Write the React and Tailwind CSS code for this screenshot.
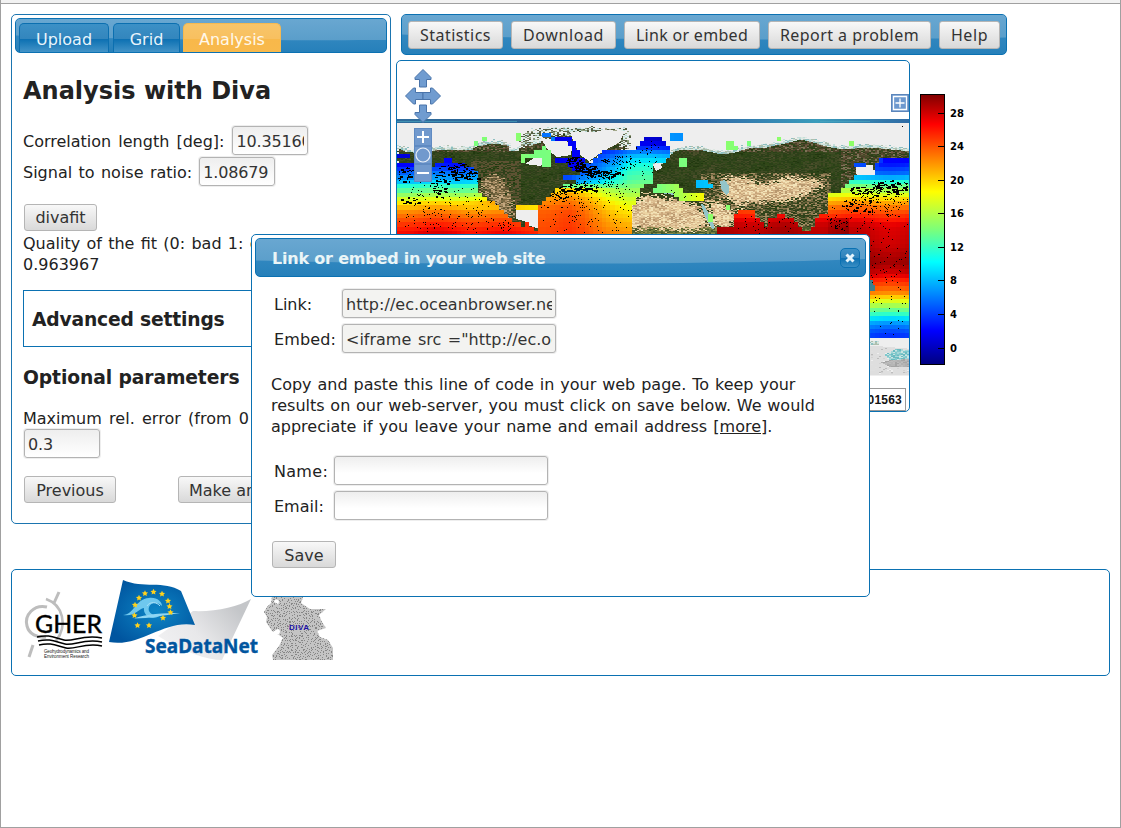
import React from "react";

/* ---------- helpers for the temperature map ---------- */
function rng(seed) {
  let s = seed;
  return () => {
    s = (s * 1664525 + 1013904223) % 4294967296;
    return s / 4294967296;
  };
}

function inside(poly, x, y) {
  let hit = false;
  for (let i = 0, j = poly.length - 1; i < poly.length; j = i++) {
    const [xi, yi] = poly[i];
    const [xj, yj] = poly[j];
    if (yi > y !== yj > y && x < ((xj - xi) * (y - yi)) / (yj - yi) + xi) hit = !hit;
  }
  return hit;
}

function profile(points, y) {
  if (y <= points[0][0]) return points[0][1];
  for (let i = 1; i < points.length; i++) {
    if (y <= points[i][0]) {
      const [y0, v0] = points[i - 1];
      const [y1, v1] = points[i];
      return v0 + ((v1 - v0) * (y - y0)) / (y1 - y0);
    }
  }
  return points[points.length - 1][1];
}

function jet(temp) {
  const t = Math.max(0, Math.min(1, (temp + 2) / 32.3));
  const c = (v) => Math.round(255 * Math.max(0, Math.min(1, v)));
  const r = t < 0.89 ? (t - 0.35) / 0.31 : 1 - (t - 0.89) * 4.5;
  const g = t < 0.64 ? (t - 0.125) / 0.25 : 1 - (t - 0.64) / 0.27;
  const b = t < 0.34 ? 0.5 + t / 0.22 : 1 - (t - 0.34) / 0.31;
  return `rgb(${c(r)},${c(g)},${c(b)})`;
}

const PAC_EAST = [[155, 1], [165, 2.5], [172, 5], [180, 7.5], [186, 11], [192, 14], [198, 17.5], [205, 20.5], [212, 23], [220, 25], [227, 26.5], [234, 27.5]];
const ATL_WEST = [[136, 1], [160, 1.5], [175, 3], [182, 6], [186, 13], [190, 20], [196, 22], [210, 24.5], [234, 25.5]];
const ATL_EAST = [[137, -0.5], [145, 1], [150, 5], [157, 8], [165, 10], [180, 12.5], [190, 15], [200, 17.5], [212, 19.5], [234, 22.5]];
const PAC_WEST = [[157, 1], [168, 4], [175, 6], [182, 11], [188, 15], [196, 19], [203, 22], [210, 24.5], [218, 26.5], [226, 28], [245, 28.5], [262, 29.8], [272, 28.5], [280, 26.5], [288, 24.5], [294, 22.5], [300, 19], [305, 16.5], [311, 13], [316, 10.5], [322, 7.5], [330, 5], [338, 3.5]];

const SEAS = [
  { poly: [[397, 153], [409, 153], [409, 157], [397, 157]], t: () => 1 },
  { poly: [[397, 160], [414, 165], [432, 168], [444, 161], [450, 157], [453, 161], [462, 163], [470, 167], [477, 172], [478, 190], [486, 198], [500, 206], [504, 213], [514, 221], [526, 227], [534, 231], [543, 236], [397, 236]], t: (x, y) => profile(PAC_EAST, y) + (x > 455 ? ((x - 455) / 45) * (y > 205 ? -0.5 : 2) : 0) },
  { poly: [[542, 133], [558, 136], [572, 136], [576, 143], [580, 152], [584, 163], [575, 173], [565, 163], [555, 162], [556, 157], [572, 157], [570, 146], [550, 141]], t: (x) => (x < 556 ? 6 : 1) },
  { poly: [[536, 236], [538, 207], [547, 197], [554, 190], [564, 185], [580, 181], [563, 181], [563, 174], [582, 174], [574, 161], [588, 163], [597, 158], [602, 150], [624, 148], [634, 148], [642, 141], [650, 137], [657, 137], [666, 143], [669, 150], [670, 158], [665, 163], [652, 164], [655, 170], [654, 182], [643, 186], [639, 196], [633, 206], [631, 236]], t: (x, y) => { const k = Math.max(0, Math.min(1, (x - 570) / 60)); return profile(ATL_WEST, y) * (1 - k) + profile(ATL_EAST, y) * k; } },
  { poly: [[524, 221], [529, 219], [534, 234], [524, 236]], t: () => 26 },
  { poly: [[518, 205], [538, 205], [538, 209], [516, 209]], t: () => 20 },
  { poly: [[653, 188], [662, 184], [679, 183], [682, 191], [704, 192], [704, 200], [678, 200], [672, 194], [653, 192]], t: (x) => 13 + (x - 650) / 9 },
  { poly: [[696, 180], [708, 179], [713, 187], [696, 188]], t: () => 8 },
  { poly: [[718, 226], [726, 226], [735, 226], [735, 216], [738, 210], [752, 210], [757, 216], [760, 224], [768, 226], [770, 218], [782, 213], [791, 219], [798, 226], [806, 230], [812, 229], [816, 219], [828, 211], [828, 191], [836, 192], [850, 184], [853, 177], [870, 177], [884, 160], [909, 157], [909, 339], [880, 338], [868, 336], [868, 236], [718, 236]], t: (x, y) => profile(PAC_WEST, y) + (x < 828 ? 0.8 : 0) + (Math.abs(x - 838) < 12 && Math.abs(y - 226) < 9 ? 1.3 : 0) },
  { poly: [[853, 162], [885, 163], [889, 157], [880, 157], [880, 162], [884, 162], [884, 175], [873, 175], [873, 164], [854, 166]], t: () => 4 },
  { poly: [[532, 154], [546, 145], [552, 149], [550, 165], [544, 169], [541, 158], [522, 161], [523, 155]], t: () => 14.4 },
  { poly: [[679, 158], [688, 158], [687, 165], [679, 165]], t: () => 14.5 },
  { poly: [[708, 213], [713, 213], [713, 221], [708, 221]], t: () => 14.5 },
  { poly: [[725, 204], [730, 204], [730, 209], [725, 209]], t: () => 14.5 },
  { poly: [[726, 142], [738, 144], [738, 149], [726, 149]], t: () => 14.5 },
  { poly: [[671, 132], [682, 132], [682, 140], [671, 140]], t: () => 7 },
  { poly: [[747, 141], [752, 141], [752, 146], [747, 146]], t: () => 14.5 },
  { poly: [[777, 137], [782, 137], [782, 141], [777, 141]], t: () => 14.5 },
  { poly: [[850, 141], [854, 141], [854, 145], [850, 145]], t: () => 14.5 },
  { poly: [[517, 131], [522, 131], [522, 140], [517, 140]], t: () => 14.5 },
  { poly: [[483, 137], [487, 137], [487, 141], [483, 141]], t: () => 14.5 },
  { poly: [[474, 141], [478, 141], [478, 145], [474, 145]], t: () => 14.5 },
];

const GAPS = [
  [[516, 208], [539, 208], [539, 229], [530, 226], [524, 221], [516, 219]],
  [[856, 165], [873, 165], [873, 174], [861, 177], [856, 174]],
  [[546, 139], [566, 140], [572, 147], [571, 155], [557, 157], [548, 150], [540, 137]],
  [[570, 132], [624, 131], [620, 142], [604, 151], [589, 161], [580, 155], [573, 140]],
  [[534, 158], [546, 157], [541, 166], [525, 164]],
  [[653, 165], [661, 163], [662, 168], [656, 171]],
];

const LAND = [
  [[397, 145], [405, 148], [420, 150], [440, 146], [470, 147], [476, 143], [492, 140], [507, 142], [508, 148], [519, 147], [519, 139], [526, 130], [542, 127], [628, 127], [628, 148], [600, 156], [590, 160], [584, 176], [570, 190], [560, 236], [397, 236]],
  [[622, 236], [622, 180], [646, 176], [650, 164], [662, 160], [664, 156], [674, 148], [684, 146], [702, 147], [722, 151], [734, 149], [748, 145], [766, 144], [784, 140], [800, 136], [813, 139], [822, 142], [840, 146], [870, 144], [909, 148], [909, 164], [868, 170], [850, 190], [846, 236]],
];
const DESERT = [
  [[482, 178], [498, 175], [508, 188], [514, 214], [502, 220], [484, 194]],
  [[622, 206], [646, 194], [660, 196], [672, 199], [700, 204], [710, 226], [690, 230], [645, 228], [622, 230]],
  [[704, 198], [722, 204], [738, 216], [726, 228], [714, 224]],
  [[722, 178], [745, 177], [762, 184], [790, 176], [824, 183], [806, 195], [780, 202], [752, 201], [738, 207], [722, 195]],
];
const ICY = [
  [[519, 127], [580, 127], [574, 134], [548, 135], [545, 141], [527, 146], [519, 146]],
  [[580, 127], [628, 127], [628, 148], [618, 145], [622, 132], [580, 133]],
];
const GREENS = ["#22380f", "#2a4217", "#304718", "#37481f", "#2b4018", "#404a24", "#2f3f1a", "#4b4e2b"];
const SANDS = ["#e6ca9c", "#ecd5a4", "#dabb8e", "#f3e3b8", "#c9a67b", "#e3c99d", "#b7986f", "#ebd2a6"];
const ICES = ["#eeeeee", "#8d9c7b", "#dfeee9", "#586045", "#b9dcd8", "#efefef", "#eeeeee", "#a2a78a"];
const COAST = ["#c5dfda", "#8ebfc0", "#aebfae", "#dde8e2"];
const POLAR = ["#d2d2d2", "#e0e0e0", "#bcbcbc", "#eeeeee"];

function buildMap() {
  const r = rng(77);
  const texture = {};
  const put = (c, x, y, w, h) => {
    texture[c] = (texture[c] || "") + `M${x} ${y}h${w}v${h}h-${w}z`;
  };
  const soft = (x, y) => Math.sin(x * 0.19 + Math.sin(y * 0.22) * 2) + Math.sin(y * 0.31 + x * 0.07);
  for (let y = 124; y < 236; y += 1) {
    for (let x = 397; x < 909; x += 2) {
      const jx = x + (r() - 0.5) * 4;
      const jy = y + (r() - 0.5) * 3;
      if (!LAND.some((p) => inside(p, jx, jy))) continue;
      const v = Math.floor(r() * 4.5 + 1.7 + soft(x, y));
      const k = Math.max(0, Math.min(7, v));
      const jx2 = x + (r() - 0.5) * 10;
      const jy2 = y + (r() - 0.5) * 7;
      let color = GREENS[k];
      if (ICY.some((p) => inside(p, jx, jy))) color = ICES[k];
      else if (DESERT.some((p) => inside(p, jx2, jy2))) color = x < 520 ? ["#a58a62", "#7a6a44", "#c4a880", "#5f5633"][k % 4] : SANDS[k];
      else if (!LAND.some((p) => inside(p, x, y - 3))) color = COAST[k % 4];
      else if ((y < 152 || (x > 840 && y > 148)) && r() > 0.5) color = ["#6b5840", "#57492f", "#7d7358", "#4b4128"][k % 4];
      else if (x > 470 && x < 520 && y > 160 && r() > 0.5) color = "#5e5233";
      else if (x > 620 && y > 226) color = ["#6d7a3c", "#55642c", "#8a8a4c", "#47582a"][k % 4];
      else if (x > 700 && x < 830 && y > 172 && r() > 0.45) color = ["#8d7850", "#6f6640", "#a68f66", "#5c5a34"][k % 4];
      put(color, x, y, 2, 1);
    }
  }
  for (let y = 341; y < 375; y += 1) {
    for (let x = 869; x < 909; x += 2) {
      const k = Math.floor(r() * 4);
      if (y < 345 && x < 879) put(COAST[k], x, y, 2, 1);
      else if (y > 345 + (x - 869) * 0.08) {
        const lake = inside([[884, 354], [895, 348], [909, 350], [909, 358], [890, 360]], x, y);
        const dark = inside([[880, 362], [895, 358], [909, 359], [909, 367], [888, 366]], x, y);
        if (lake) put(["#80c8cc", "#a5d6d8", "#6bbac0", "#cce4e2"][k], x, y, 2, 1);
        else if (dark) put(["#b0b0b0", "#a4a4a4", "#bcbcbc", "#b5b5b5"][k], x, y, 2, 1);
        else put(r() > 0.85 ? POLAR[k] : "#dedede", x, y, 2, 1);
      }
    }
  }
  const cells = {};
  const cw = 512 / 120;
  for (let j = 0; j < 64; j++) {
    for (let i = 0; i < 120; i++) {
      const x = 397 + i * cw;
      const y = 120 + j * cw;
      const cx = x + cw / 2;
      const cy = y + cw / 2;
      if (cy > 240 && cx < 866) continue;
      if (GAPS.some((p) => inside(p, cx, cy))) continue;
      const sea = SEAS.find((s) => inside(s.poly, cx, cy));
      if (!sea) continue;
      const t = sea.t(cx, cy) + Math.sin(cx * 0.09) * 0.4;
      const col = jet(t);
      const x0 = Math.round(x);
      const y0 = Math.round(y);
      cells[col] = (cells[col] || "") + `M${x0} ${y0}H${Math.round(x + cw)}V${Math.round(y + cw)}H${x0}z`;
    }
  }
  /* observation positions: [cx, cy, rx, ry, count, streak length] */
  const clusters = [
    [440, 175, 42, 9, 60, 4], [457, 171, 20, 9, 60, 5], [405, 176, 10, 9, 22, 4], [439, 190, 7, 7, 22, 4],
    [410, 200, 14, 4, 16, 3], [455, 195, 45, 24, 110, 1], [450, 222, 60, 12, 70, 1], [505, 226, 8, 6, 16, 1],
    [574, 162, 9, 6, 42, 3], [585, 168, 12, 6, 45, 4], [602, 173, 20, 4, 60, 4], [575, 188, 22, 4, 60, 4],
    [558, 195, 10, 7, 40, 2], [595, 180, 22, 8, 60, 1], [622, 162, 18, 7, 55, 1], [606, 160, 5, 3, 14, 2],
    [600, 205, 40, 30, 120, 1], [560, 205, 22, 26, 40, 1], [648, 149, 14, 9, 14, 1], [650, 165, 10, 18, 18, 1],
    [875, 190, 26, 6, 60, 4], [890, 186, 18, 6, 45, 4], [858, 205, 18, 7, 38, 3], [885, 198, 24, 18, 100, 1],
    [870, 215, 45, 20, 80, 1], [838, 222, 9, 8, 30, 1], [750, 225, 18, 10, 22, 1], [782, 226, 15, 9, 14, 1],
    [885, 258, 22, 24, 46, 1], [888, 300, 20, 36, 34, 1], [680, 193, 22, 6, 10, 1],
  ];
  let dots = "M902 126h1v1h-1z";
  const d = rng(912);
  clusters.forEach(([cx, cy, rx, ry, n, len]) => {
    for (let i = 0; i < n; i++) {
      const a = d() * Math.PI * 2;
      const q = Math.sqrt(d());
      const x = Math.round(cx + Math.cos(a) * q * rx);
      const y = Math.round(cy + Math.sin(a) * q * ry);
      const w = 1 + Math.floor(d() * len);
      const h = len > 2 && d() > 0.7 ? 2 : 1;
      if (x < 398 || x + w > 908) continue;
      if (!SEAS.some((s) => inside(s.poly, x, y)) || GAPS.some((p) => inside(p, x, y))) continue;
      dots += `M${x} ${y}h${w}v${h}h-${w}z`;
    }
  });
  return { texture: Object.entries(texture), cells: Object.entries(cells), dots };
}

const MAP = buildMap();

function OceanMap() {
  return (
    <svg className="block" width="512" height="349" viewBox="397 61 512 349" shapeRendering="crispEdges">
      <defs>
        <linearGradient id="strip" x1="0" x2="1" y1="0" y2="0">
          <stop offset="0" stopColor="#2f6d9c" /><stop offset=".3" stopColor="#2a5f92" /><stop offset=".6" stopColor="#2f6ba8" />
          <stop offset=".82" stopColor="#3a9cbb" /><stop offset="1" stopColor="#2f6ba5" />
        </linearGradient>
      </defs>
      <rect x="397" y="119" width="512" height="257" fill="#eeeeee" />
      <rect x="397" y="119" width="512" height="4" fill="url(#strip)" />
      <path d="M397 121h120v1h-120zM820 121h50v1h-50z" fill="#4aa3bd" opacity=".7" />
      {MAP.texture.map(([c, p]) => <path key={c} d={p} fill={c} />)}
      {GAPS.map((g, i) => <polygon key={i} points={g.map((q) => q.join(",")).join(" ")} fill="#eeeeee" />)}
      <path d="M720 181l5-1 4 6v7l-3 2-4-4zM701 204l3 1 6 11 5 12-3 1-7-13zM654 192l20 3 12 6h16v-2h-18l-12-6z" fill="#93c5c9" />
      {MAP.cells.map(([c, p]) => <path key={c} d={p} fill={c} />)}
      <path d="M870 280h3v5h2v6h-5z" fill="#3d7f8d" />
      <path d={MAP.dots} fill="#000" />
    </svg>
  );
}

function MapControls() {
  const arrow = "M0-9.5 8-1.500V.5H3.500V8h-7V.5H-8v-2z";
  return (
    <svg className="absolute left-2 top-1.5" width="38" height="118" viewBox="405 67 38 118">
      <g fill="#709cd0" stroke="#4a74aa" strokeWidth="1">
        <path d={arrow} transform="translate(423 79)" />
        <path d={arrow} transform="translate(415 96) rotate(-90)" />
        <path d={arrow} transform="translate(431 96) rotate(90)" />
        <path d={arrow} transform="translate(423 113) rotate(180)" />
      </g>
      <g fill="#7199cd" stroke="#5f8ac2">
        <rect x="414.5" y="128.500" width="17" height="17" />
        <rect x="414.5" y="146.500" width="17" height="17" />
        <rect x="414.5" y="164.500" width="17" height="17" />
      </g>
      <path d="M417 137h12M423 131v12M417 173h12" stroke="#fff" strokeWidth="2" />
      <circle cx="423" cy="155" r="7" fill="none" stroke="#e9eff8" strokeWidth="1.2" />
    </svg>
  );
}

/* ---------- shared widgets ---------- */
const BLUE_BAR = "relative overflow-hidden rounded-[5px] border border-[#0b71b2] bg-linear-to-b from-[#3d90c6] to-[#2680ba]";

function Gloss({ d }) {
  return (
    <svg className="absolute inset-0 h-full w-full" viewBox="0 0 100 100" preserveAspectRatio="none">
      <defs>
        <linearGradient id="gloss" x1="0" x2="0" y1="0" y2="1">
          <stop offset="0" stopColor="#69a7d1" /><stop offset="1" stopColor="#5a9eca" />
        </linearGradient>
      </defs>
      <path d={d} fill="url(#gloss)" />
    </svg>
  );
}

function Button({ children, className }) {
  return (
    <button className={`flex shrink-0 items-center justify-center rounded-[3px] border border-[#b5b5b5] bg-linear-to-b from-[#f8f8f8] to-[#d9d9d9] whitespace-nowrap text-[#333] ${className}`}>
      {children}
    </button>
  );
}

function Field({ className, value }) {
  return (
    <input
      readOnly
      value={value}
      className={`h-[29px] shrink-0 rounded-[3px] border border-[#b3b3b3] px-[3px] pt-[2px] text-[16px] text-[#333] shadow-[0_0_0_1px_#eeeeee] ${className}`}
    />
  );
}

function Tab({ children, className }) {
  return <div className={`flex h-[30px] items-center justify-center rounded-t-[5px] border border-b-0 pt-[3px] ${className}`}>{children}</div>;
}

/* ---------- page sections ---------- */
function AnalysisPanel() {
  const tab = "border-[#0b6fb0] bg-[linear-gradient(#3c90c6_0%,#3386bd_50%,#0c70b2_52%,#4796c9_100%)]";
  const field = "w-[76px] bg-linear-to-b from-[#eeeeee] to-white tracking-[-0.15px]";
  return (
    <section className="h-[510px] w-[380px] shrink-0 rounded-[5px] border border-[#1b75b0] bg-white p-[3px]">
      <div className={`${BLUE_BAR} h-[35px] w-[372px]`}>
        <Gloss d="M0 0H100V64C70 66 30 62 0 50Z" />
        <div className="relative flex gap-[4px] pl-[3px] pt-[4px] text-[16px] text-[#e8f4fb]">
          <Tab className={`w-[90px] ${tab}`}>Upload</Tab>
          <Tab className={`w-[67px] ${tab}`}>Grid</Tab>
          <Tab className="-ml-px w-[98px] border-[#f6b950] bg-[linear-gradient(#f8c569_0%,#f8c060_50%,#f8b84a_52%,#f8b94c_100%)] text-[#fff8ea]">Analysis</Tab>
        </div>
      </div>
      <div className="pl-[8px]">
        <h2 className="mt-[23px] h-[30px] text-[24px] leading-[30px] font-bold whitespace-nowrap">Analysis with Diva</h2>
        <div className="mt-[19px] flex h-[31px] items-center gap-[8px] whitespace-nowrap [word-spacing:2px]">
          <span className="pt-[2px]">Correlation length [deg]:</span>
          <Field className={field} value="10.351605" />
        </div>
        <div className="flex h-[31px] items-center gap-[7px] whitespace-nowrap [word-spacing:1.3px]">
          <span className="pt-[2px]">Signal to noise ratio:</span>
          <Field className={field} value="1.08679" />
        </div>
        <Button className="mt-[17px] ml-px h-[27px] w-[73px] pt-px">divafit</Button>
        <div className="mt-[2px] leading-[21px] whitespace-nowrap [word-spacing:1.2px]">Quality of the fit (0: bad 1: good):<br />0.963967</div>
        <div className="mt-[15px] flex h-[57px] w-[356px] items-center border border-[#0b71b2] pt-[3px] pl-[8px]">
          <h3 className="text-[18.720px] font-bold tracking-[-0.18px]">Advanced settings</h3>
        </div>
        <h3 className="mt-[19px] h-[24px] text-[18.720px] leading-[24px] font-bold tracking-[-0.1px]">Optional parameters</h3>
        <div className="mt-[18px] h-[21px] leading-[21px] whitespace-nowrap [word-spacing:2.2px]">Maximum rel. error (from 0 to 1):</div>
        <Field className={`ml-px block ${field}`} value="0.3" />
        <div className="mt-[18px] ml-px flex gap-[62px]">
          <Button className="h-[27px] w-[92px] pt-[2px]">Previous</Button>
          <Button className="h-[27px] w-[134px] pt-[2px]">Make analysis</Button>
        </div>
      </div>
    </section>
  );
}

function Toolbar() {
  return (
    <div className={`${BLUE_BAR} ml-[4px] h-[41px] w-[606px]`}>
      <Gloss d="M0 0H100V58C75 66 25 64 0 50Z" />
      <div className="relative flex gap-[8px] pl-[6px] pt-[6px] font-['Noto_Sans',sans-serif] text-[16px]">
        <Button className="h-[28px] w-[95px] tracking-[0.45px]">Statistics</Button>
        <Button className="h-[28px] w-[105px] tracking-[0.6px]">Download</Button>
        <Button className="h-[28px] w-[136px] tracking-[0.3px]">Link or embed</Button>
        <Button className="h-[28px] w-[163px] tracking-[0.45px]">Report a problem</Button>
        <Button className="h-[28px] w-[61px] tracking-[0.6px]">Help</Button>
      </div>
    </div>
  );
}

const TICKS = [[28, 20], [24, 53], [20, 87], [16, 120], [12, 154], [8, 187], [4, 221], [0, 255]];

function ColorBar() {
  return (
    <svg className="ml-[10px] mt-[33px] shrink-0" width="56" height="273" viewBox="0 0 56 273">
      <defs>
        <linearGradient id="jet" x1="0" x2="0" y1="0" y2="1">
          <stop offset="0" stopColor="#800000" /><stop offset=".11" stopColor="#f00" /><stop offset=".36" stopColor="#ff0" />
          <stop offset=".5" stopColor="#7cff79" /><stop offset=".62" stopColor="#0ff" /><stop offset=".875" stopColor="#00f" /><stop offset="1" stopColor="#00007f" />
        </linearGradient>
      </defs>
      <rect x=".5" y="1.500" width="24" height="270" fill="url(#jet)" stroke="#000" />
      {TICKS.map(([v, y]) => (
        <g key={v}>
          <path d={`M18 ${y + 0.5}h6`} stroke="#000" strokeWidth="1" />
          <text x="30" y={y + 3.5} fontSize="10" fontWeight="bold" fontFamily="DejaVu Sans" textLength={v > 9 ? 14 : 7}>{v}</text>
        </g>
      ))}
    </svg>
  );
}

function MapPanel() {
  return (
    <div className="mt-[5px] flex">
      <div className="relative -ml-px h-[352px] w-[514px] shrink-0 overflow-hidden rounded-[5px] border border-[#0b71b2] bg-white">
        <OceanMap />
        <MapControls />
        <svg className="absolute right-0 top-[33px]" width="18" height="18" viewBox="0 0 18 18">
          <rect width="18" height="18" fill="#6d98ce" />
          <path d="M2.500 2.500h13v13h-13zM9 4.500v9M4.500 9h9" fill="none" stroke="#fff" strokeWidth="1.300" />
          <path d="M.5.500h17v17H.5z" fill="none" stroke="#5b85bb" />
        </svg>
        <div className="absolute right-[3px] bottom-0 h-[23px] border border-[#999] bg-white px-[3px] font-['Liberation_Sans',sans-serif] text-[12px] leading-[22px] font-bold tracking-[0.2px] whitespace-nowrap text-[#111]">
          -81.01563
        </div>
      </div>
      <ColorBar />
    </div>
  );
}

function star(cx, cy, r) {
  let d = "";
  for (let i = 0; i < 10; i++) {
    const a = -Math.PI / 2 + (i * Math.PI) / 5;
    const q = i % 2 ? r * 0.5 : r;
    d += `${i ? "L" : "M"}${(cx + Math.cos(a) * q).toFixed(2)} ${(cy + Math.sin(a) * q).toFixed(2)}`;
  }
  return d + "z";
}
const STARS = [[153.500, 592], [162, 594], [168, 601], [170.500, 612.500], [163, 618], [149, 625.500], [137.500, 625.500], [134.500, 615.500], [135, 605], [139, 598], [145, 593.500], [169.500, 606.500]];

const SPECKLE = (() => {
  const r = rng(31);
  let d = "";
  for (let y = 596; y < 661; y += 2) for (let x = 264; x < 336; x += 2) if (r() > 0.2) d += `M${x + Math.round(r())} ${y + Math.round(r())}h1v1h-1z`;
  return d;
})();

function Footer() {
  return (
    <footer className="mt-[45px] h-[107px] w-[1099px] rounded-[5px] border border-[#0b71b2]">
      <svg width="340" height="105" viewBox="12 570 340 105">
        <defs>
          <radialGradient id="flag" cx=".55" cy=".5" r=".6"><stop offset="0" stopColor="#0d86c6" /><stop offset="1" stopColor="#00559f" /></radialGradient>
          <linearGradient id="grey" x1="0" x2="1" y1="1" y2=".4"><stop offset="0" stopColor="#f4f4f5" /><stop offset=".5" stopColor="#e8e8ea" /><stop offset="1" stopColor="#c4c6c9" /></linearGradient>
          <clipPath id="diva"><path d="M272 597h31l-2 6 9 6 16 0-7 6 3 7 4 6-9 3 3 6 8 3 5 8v12h-60l-1-5 7-9 4-8-4-3-7-4-6-9 1-5-3-5 3-5 4-4z" /></clipPath>
        </defs>
        <g fill="none" stroke="#bdbdbd" strokeWidth="3">
          <path d="M47 607C34 604 24 615 27 626C29 634 37 638 46 637" />
          <path d="M46 599C63 605 68 625 56 641" strokeWidth="2.600" />
          <path d="M59 592L54 603M33 645L29 657" />
        </g>
        <text x="35" y="633" fontFamily="Lato" fontSize="25" fontWeight="400" stroke="#000" strokeWidth=".4" textLength="67" lengthAdjust="spacingAndGlyphs">GHER</text>
        <g fill="none" stroke="#000" strokeWidth="1.500">
          <path d="M37 637C49 634 55 638 64 640S83 634 102 638" />
          <path d="M38 641C50 638 56 642 65 644S84 638 102 642" />
          <path d="M39 645C51 642 57 646 66 648S85 642 102 646" />
        </g>
        <g fontFamily="Liberation Sans" fontSize="4.500" fill="#222">
          <text x="44" y="653" textLength="45">Geohydrodynamics and</text>
          <text x="44" y="658" textLength="45">Environment Research</text>
        </g>
        <path d="M193 611C215 612 238 607 251 599L222 660C207 660 184 652 158 636Z" fill="url(#grey)" />
        <path d="M123 580C143 589 164 580 181 591L195 625C164 619 140 648 109 642Z" fill="url(#flag)" />
        <path d="M123 615C134 615 135 599 149 598C157 597 162 602 162 606C158 602 151 602 149 607C147 613 154 617 161 615C151 622 143 615 144 608C138 609 135 617 123 615Z" fill="#6fc8ee" />
        <path d="M147 606C150 601 157 602 160 606" fill="none" stroke="#a9e1f7" strokeWidth="1" />
        <path d="M134 618.500C145 614 164 613 180 613C162 615.500 150 618.500 134 618.500Z" fill="#8fd6f3" />
        <path d={STARS.map(([x, y]) => star(x, y, 3.2)).join("")} fill="#ffd21c" />
        <text x="145" y="652.500" fontFamily="Noto Sans" fontSize="19" fontWeight="bold" fill="#00559f" stroke="#00559f" strokeWidth=".4" textLength="113" lengthAdjust="spacingAndGlyphs">SeaDataNet</text>
        <g clipPath="url(#diva)">
          <rect x="262" y="590" width="75" height="70" fill="#c4c4c4" />
          <path d={SPECKLE} fill="#868686" shapeRendering="crispEdges" />
        </g>
        <path d="M274 602a2.500 2.500 0 1 1 4 2zM274 631a3 3 0 1 0 4-2z" fill="#fff" />
        <text x="289" y="630" fontFamily="Liberation Sans" fontWeight="bold" fontSize="8" fill="#1c12a8" textLength="20">DIVA</text>
      </svg>
    </footer>
  );
}

function LinkDialog() {
  const blank = "w-[214px] bg-linear-to-b from-[#eeeeee] to-white to-60%";
  return (
    <div className="absolute top-[234px] left-[250px] h-[363px] w-[619px] rounded-[5px] border border-[#0b71b2] bg-white p-[3px]">
      <div className={`${BLUE_BAR} h-[39px]`}>
        <Gloss d="M0 0H100V54C75 70 25 70 0 58Z" />
        <div className="relative flex h-full items-center justify-between pr-[5px] pl-[16px] pt-px">
          <span className="pt-[2px] text-[16px] font-bold tracking-[-0.2px] text-[#eaf5f7]">Link or embed in your web site</span>
          <span className="flex size-[20px] items-center justify-center rounded-[5px] border border-[#0b71b2] bg-[linear-gradient(#3c90c6_0%,#2f83bb_48%,#0c70b2_52%,#3a8ec4_100%)]">
            <svg width="10" height="10" viewBox="0 0 10 10"><path d="M1.500 1.500l7 7M8.500 1.500l-7 7" stroke="#e4f4fc" strokeWidth="3" /></svg>
          </span>
        </div>
      </div>
      <div className="pl-[16px]">
        <div className="mt-[12px] ml-[3px] grid grid-cols-[68px_214px] gap-y-[6px] leading-[29px] whitespace-nowrap">
          <span className="h-[29px] pt-px">Link:</span><Field className="w-[214px] bg-[#f3f3f1] tracking-[0.05px]" value="http://ec.oceanbrowser.net/emodnet/diva" />
          <span className="h-[29px] pt-px tracking-[0.15px]">Embed:</span><Field className="w-[214px] bg-[#f3f3f1] [word-spacing:1.5px]" value={'<iframe src ="http://ec.oceanbrowser.net/emodnet/diva"></iframe>'} />
        </div>
        <p className="mt-[21px] leading-[21px] whitespace-nowrap">
          <span className="[word-spacing:0.85px]">Copy and paste this line of code in your web page. To keep your</span><br />
          <span className="[word-spacing:0.65px]">results on our web-server, you must click on save below. We would</span><br />
          <span className="[word-spacing:1.1px]">appreciate if you leave your name and email address <span className="underline">[more]</span>.</span>
        </p>
        <div className="mt-[19px] ml-[3px] grid grid-cols-[60px_214px] gap-y-[6px] leading-[29px] whitespace-nowrap">
          <span className="h-[29px] pt-px tracking-[0.3px]">Name:</span><Field className={blank} value="" />
          <span className="h-[29px] pt-px">Email:</span><Field className={blank} value="" />
        </div>
        <Button className="mt-[21px] ml-px h-[27px] w-[64px] pt-[2px]">Save</Button>
      </div>
    </div>
  );
}

export default function App() {
  return (
    <div className="relative h-[828px] w-[1121px] overflow-hidden border border-t-0 border-[#a0a0a0] bg-white font-['DejaVu_Sans',Verdana,sans-serif] text-[16px] text-[#222]">
      <div className="h-[4px] border-b border-[#a0a0a0] bg-[#f2f2f2]" />
      <main className="pt-[10px] pl-[10px]">
        <div className="flex gap-[6px]">
          <AnalysisPanel />
          <div>
            <Toolbar />
            <MapPanel />
          </div>
        </div>
        <Footer />
      </main>
      <LinkDialog />
    </div>
  );
}
